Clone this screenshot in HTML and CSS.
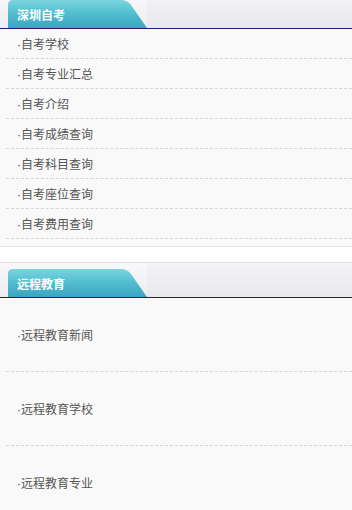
FILE: index.html
```html
<!DOCTYPE html>
<html lang="zh-CN">
<head>
    <meta charset="UTF-8">
    <meta name="viewport" content="width=device-width, initial-scale=1.0">
    <title>深圳自考</title>
    <link rel="stylesheet" href="styles.css">
</head>
<body>
    <div class="box box-first">
        <div class="box-head">
            <div class="tab-bg"><div class="tab">深圳自考</div></div>
        </div>
        <ul class="link-list">
            <li><a href="#">·自考学校</a></li>
            <li><a href="#">·自考专业汇总</a></li>
            <li><a href="#">·自考介绍</a></li>
            <li><a href="#">·自考成绩查询</a></li>
            <li><a href="#">·自考科目查询</a></li>
            <li><a href="#">·自考座位查询</a></li>
            <li><a href="#">·自考费用查询</a></li>
        </ul>
    </div>

    <div class="box">
        <div class="box-head">
            <div class="tab-bg"><div class="tab">远程教育</div></div>
        </div>
        <ul class="link-list tall">
            <li><a href="#">·远程教育新闻</a></li>
            <li><a href="#">·远程教育学校</a></li>
            <li><a href="#">·远程教育专业</a></li>
        </ul>
    </div>
</body>
</html>
```

FILE: styles.css
```css
body {
    margin: 0;
    background: #fff;
    font-family: "Noto Sans CJK SC", "Microsoft YaHei", sans-serif;
    font-size: 12px;
    height: 510px;
    overflow: hidden;
}

.box {
    border-top: 1px solid #dedde2;
    border-bottom: 1px solid #e8e3ec;
    margin-bottom: 15px;
}

.box-first {
    margin-top: -7px;
}

.box-head {
    height: 34px;
    background: linear-gradient(#f3f3f5, #e9e9ec);
    border-bottom: 1px solid #2b1b6f;
}

.tab-bg {
    width: 147px;
    height: 34px;
    padding: 6px 0 0 8px;
    box-sizing: border-box;
    background: linear-gradient(#f8f8fa, #eeeef1);
}

.tab {
    width: 139px;
    height: 28px;
    line-height: 29px;
    padding-left: 9px;
    box-sizing: border-box;
    color: #fff;
    font-size: 12px;
    font-weight: bold;
    background: linear-gradient(#7ad5df, #53bfd0 45%, #3aa5c1);
    clip-path: path('M0,28 V5 Q0,0 5,0 H113 Q119,0 123,5 L139,28 Z');
}

.link-list {
    list-style: none;
    margin: 0;
    padding: 0 0 7px;
    background: #f9f9f9;
}

.link-list li {
    margin-left: 6px;
    padding-left: 11px;
    height: 29px;
    line-height: 29px;
    border-bottom: 1px dashed #d6d6d6;
}

.link-list a {
    font-family: "Liberation Sans", "Noto Sans CJK SC", sans-serif;
    color: #555;
    text-decoration: none;
}

.link-list.tall li {
    height: 73px;
    line-height: 73px;
}
```
